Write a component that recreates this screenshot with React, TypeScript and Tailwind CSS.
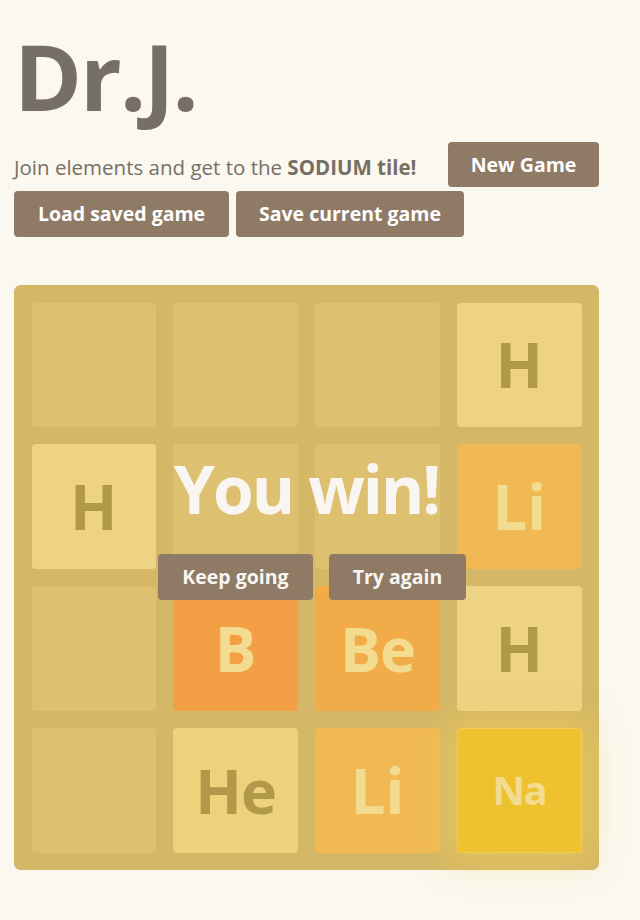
import React from "react";

type Tile = { label: string; bg: string; color: string; size: string; glow?: boolean } | null;

const H: Tile = { label: "H", bg: "bg-[#eee4da]", color: "text-[#776e65]", size: "text-[62px]" };
const He: Tile = { label: "He", bg: "bg-[#ede0c8]", color: "text-[#776e65]", size: "text-[61px] tracking-[-1px]" };
const Li: Tile = { label: "Li", bg: "bg-[#f2b179]", color: "text-[#f9f6f2]", size: "text-[62px]" };
const Be: Tile = { label: "Be", bg: "bg-[#f59563]", color: "text-[#f9f6f2]", size: "text-[61px] tracking-[-1px]" };
const B: Tile = { label: "B", bg: "bg-[#f67c5f]", color: "text-[#f9f6f2]", size: "text-[62px]" };
const Na: Tile = { label: "Na", bg: "bg-[#edc22e]", color: "text-[#f9f6f2]", size: "text-[40px] tracking-[-1.5px]", glow: true };

const rows: Tile[][] = [
  [null, null, null, H],
  [H, null, null, Li],
  [null, B, Be, H],
  [null, He, Li, Na],
];

const font = { fontFamily: '"Open Sans", "Noto Sans", sans-serif' };

export default function App() {
  return (
    <div className="min-h-[920px] w-[640px] bg-[#faf8ef] text-[#776e65]" style={font}>
      <div className="pl-[14px] w-[599px]">
        <h1 className="pt-[26px] text-[92px] font-bold leading-[100px] tracking-[-2px] pl-[0px]">Dr.J.</h1>
        <div className="mt-[16px] flex items-center justify-between">
          <p className="text-[20.5px] leading-[24px] pt-[4px]">
            Join elements and get to the <b>SODIUM tile!</b>
          </p>
          <button className="w-[151px] h-[45px] rounded-[4px] bg-[#8f7a66] text-white font-bold text-[19.5px]">New Game</button>
        </div>
        <div className="mt-[4px] flex gap-[7px]">
          <button className="w-[215px] h-[46px] rounded-[4px] bg-[#8f7a66] text-white font-bold text-[19.5px]">Load saved game</button>
          <button className="w-[228px] h-[46px] rounded-[4px] bg-[#8f7a66] text-white font-bold text-[19.5px]">Save current game</button>
        </div>
        <div className="relative mt-[48px] w-[585px] h-[585px] rounded-[7px] bg-[#bbada0] p-[17.5px] grid grid-cols-4 grid-rows-4 gap-[17.5px]">
          {rows.flat().map((t, i) =>
            t ? (
              <div
                key={i}
                className={`${t.bg} ${t.color} ${t.size} rounded-[4px] flex items-center justify-center font-bold ${t.glow ? "shadow-[0_0_30px_10px_rgba(243,215,116,0.55),inset_0_0_0_1px_rgba(255,255,255,0.33)]" : ""}`}
              >
                {t.label}
              </div>
            ) : (
              <div key={i} className="rounded-[4px] bg-[rgba(238,228,218,0.35)]" />
            )
          )}
          <div className="absolute inset-0 rounded-[7px] bg-[rgba(237,194,46,0.5)] flex flex-col items-center">
            <p className="mt-[163px] text-[66px] font-bold leading-[80px] text-[#f9f6f2] tracking-[-2px]">You win!</p>
            <div className="mt-[26px] ml-[11px] flex gap-[16px]">
              <button className="w-[155px] h-[46px] rounded-[4px] bg-[#8f7a66] text-[#f9f6f2] font-bold text-[19.5px]">Keep going</button>
              <button className="w-[137px] h-[46px] rounded-[4px] bg-[#8f7a66] text-[#f9f6f2] font-bold text-[19.5px]">Try again</button>
            </div>
          </div>
        </div>
      </div>
    </div>
  );
}
